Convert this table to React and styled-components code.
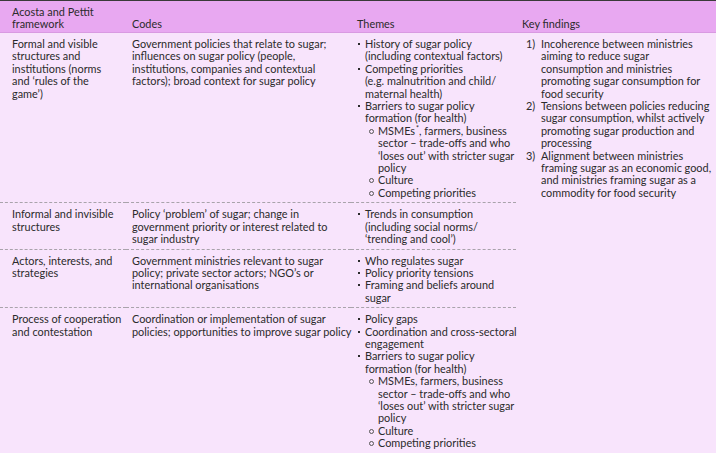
import styled, { createGlobalStyle } from "styled-components";

const GlobalStyle = createGlobalStyle`
  html, body {
    margin: 0;
    padding: 0;
    background: #fff;
  }
  body {
    font-family: Lato, "Liberation Sans", sans-serif;
  }
`;

// line breaks follow the typeset original
const rows = [
  {
    framework: "Formal and visible\nstructures and\ninstitutions (norms\nand \u2018rules of the\ngame\u2019)",
    codes: "Government policies that relate to sugar;\ninfluences on sugar policy (people,\ninstitutions, companies and contextual\nfactors); broad context for sugar policy",
    themes: [
      { text: "History of sugar policy\n(including contextual factors)" },
      { text: "Competing priorities\n(e.g. malnutrition and child/\nmaternal health)" },
      {
        text: "Barriers to sugar policy\nformation (for health)",
        sub: [
          { text: "MSMEs", star: true, rest: ", farmers, business\nsector \u2013 trade-offs and who\n\u2018loses out\u2019 with stricter sugar\npolicy" },
          { text: "Culture" },
          { text: "Competing priorities" },
        ],
      },
    ],
  },
  {
    framework: "Informal and invisible\nstructures",
    codes: "Policy \u2018problem\u2019 of sugar; change in\ngovernment priority or interest related to\nsugar industry",
    themes: [{ text: "Trends in consumption\n(including social norms/\n\u2018trending and cool\u2019)" }],
  },
  {
    framework: "Actors, interests, and\nstrategies",
    codes: "Government ministries relevant to sugar\npolicy; private sector actors; NGO\u2019s or\ninternational organisations",
    themes: [
      { text: "Who regulates sugar" },
      { text: "Policy priority tensions" },
      { text: "Framing and beliefs around\nsugar" },
    ],
  },
  {
    framework: "Process of cooperation\nand contestation",
    codes: "Coordination or implementation of sugar\npolicies; opportunities to improve sugar policy",
    themes: [
      { text: "Policy gaps" },
      { text: "Coordination and cross-sectoral\nengagement" },
      {
        text: "Barriers to sugar policy\nformation (for health)",
        sub: [
          { text: "MSMEs, farmers, business\nsector \u2013 trade-offs and who\n\u2018loses out\u2019 with stricter sugar\npolicy" },
          { text: "Culture" },
          { text: "Competing priorities" },
        ],
      },
    ],
  },
];

const findings = [
  "Incoherence between ministries\naiming to reduce sugar\nconsumption and ministries\npromoting sugar consumption for\nfood security",
  "Tensions between policies reducing\nsugar consumption, whilst actively\npromoting sugar production and\nprocessing",
  "Alignment between ministries\nframing sugar as an economic good,\nand ministries framing sugar as a\ncommodity for food security",
];

export default function App() {
  return (
    <>
      <GlobalStyle />
      <Table>
        <colgroup>
          <col style={{ width: 126 }} />
          <col style={{ width: 225 }} />
          <col style={{ width: 165 }} />
          <col style={{ width: 200 }} />
        </colgroup>
        <thead>
          <tr>
            <Th $first>{"Acosta and Pettit\nframework"}</Th>
            <Th>Codes</Th>
            <Th>Themes</Th>
            <Th>Key findings</Th>
          </tr>
        </thead>
        <tbody>
          {rows.map((row, i) => (
            <tr key={i}>
              <Td $first $dashed={i < rows.length - 1}>{row.framework}</Td>
              <Td $dashed={i < rows.length - 1}>{row.codes}</Td>
              <Td $dashed={i < rows.length - 1} $themes>
                <BulletList>
                  {row.themes.map((t, j) => (
                    <Bullet key={j}>
                      {t.text}
                      {t.sub && (
                        <SubList>
                          {t.sub.map((s, k) => (
                            <SubBullet key={k}>
                              {s.text}
                              {s.star && <Star>*</Star>}
                              {s.rest}
                            </SubBullet>
                          ))}
                        </SubList>
                      )}
                    </Bullet>
                  ))}
                </BulletList>
              </Td>
              {i === 0 && (
                <Td rowSpan={rows.length} $last>
                  <NumberList>
                    {findings.map((f, j) => (
                      <Numbered key={j} data-n={`${j + 1})`}>{f}</Numbered>
                    ))}
                  </NumberList>
                </Td>
              )}
            </tr>
          ))}
        </tbody>
      </Table>
    </>
  );
}

const Table = styled.table`
  width: 716px;
  border-collapse: collapse;
  table-layout: fixed;
  background: #f8e4fc;
  color: #2b2b2b;
  font-size: 10.9px;
  line-height: 12.4px;
  border-top: 1.5px solid #3a3a3a;
  border-bottom: 2px solid #3a3a3a;
  box-shadow: 0 2px 0 #cfcfcf;
`;

const Th = styled.th`
  background: #e8a8f1;
  text-align: left;
  font-weight: 400;
  vertical-align: bottom;
  white-space: pre;
  line-height: 12px;
  padding: 5px 6px 2px ${(p) => (p.$first ? "12px" : "6px")};
  border-bottom: 1px solid #d99ae2;
`;

const Td = styled.td`
  vertical-align: top;
  white-space: pre;
  padding: 5px ${(p) => (p.$last ? "3px" : "6px")} 3px;
  padding-left: ${(p) => (p.$first ? "12px" : p.$themes ? "7px" : "6px")};
  border-bottom: ${(p) => (p.$dashed ? "1px dashed #a9a3ab" : "none")};
`;

const BulletList = styled.ul`
  list-style: none;
  margin: 0;
  padding: 0;
`;

const Bullet = styled.li`
  position: relative;
  padding-left: 7px;

  &::before {
    content: "";
    position: absolute;
    left: 0;
    top: 5px;
    width: 2px;
    height: 2px;
    background: #2b2b2b;
  }
`;

const SubList = styled.ul`
  list-style: none;
  margin: 0;
  padding: 0 0 0 4px;
`;

const SubBullet = styled.li`
  position: relative;
  padding-left: 9px;

  &::before {
    content: "";
    position: absolute;
    left: 0;
    top: 4px;
    width: 3px;
    height: 3px;
    border: 0.8px solid #555;
    border-radius: 50%;
  }
`;

const Star = styled.span`
  display: inline-block;
  vertical-align: top;
  margin: 0 0 0 1px;
  font-size: 7px;
  line-height: 7px;
`;

const NumberList = styled.ol`
  list-style: none;
  margin: 0;
  padding: 0 0 0 4px;
`;

const Numbered = styled.li`
  position: relative;
  padding-left: 15px;

  &::before {
    content: attr(data-n);
    position: absolute;
    left: 0;
    top: 0;
  }
`;
